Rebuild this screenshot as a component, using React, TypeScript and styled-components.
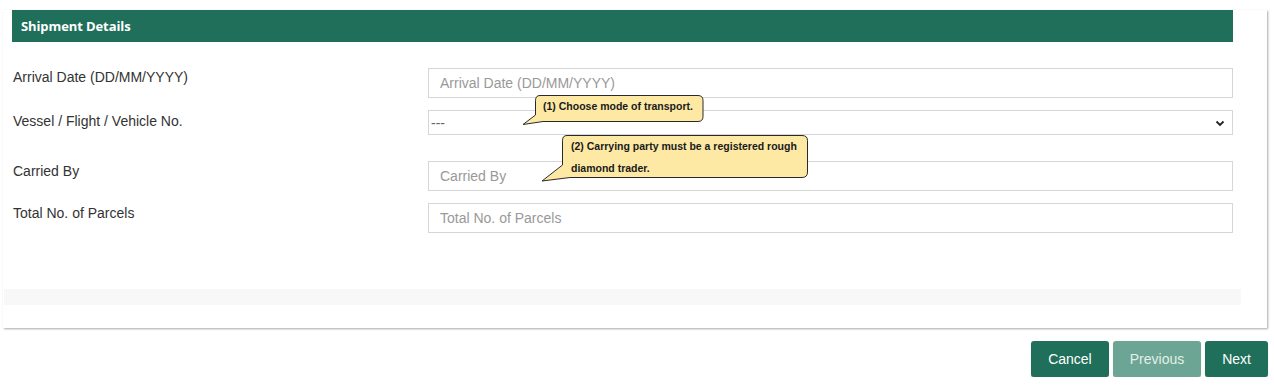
import styled, { createGlobalStyle } from "styled-components";

const GlobalStyle = createGlobalStyle`
   body {
      margin: 0;
      background: #ffffff;
      font-family: "Liberation Sans", Arial, sans-serif;
   }
`;

const Page = styled.div`
   width: 1268px;
   padding: 10px 0 0 3px;
   box-sizing: border-box;
   position: relative;
`;

const Panel = styled.div`
   width: 1264px;
   height: 318px;
   box-sizing: border-box;
   background: #ffffff;
   box-shadow: 1px 1px 2px rgba(0, 0, 0, 0.35);
   display: flex;
   flex-direction: column;
`;

const Header = styled.div`
   margin-left: 9px;
   width: 1221px;
   height: 32px;
   background: #206f5a;
   color: #ffffff;
   font-family: "Open Sans", "Noto Sans", sans-serif;
   font-weight: 700;
   font-size: 13px;
   display: flex;
   align-items: center;
   padding-left: 9px;
   box-sizing: border-box;
   letter-spacing: -0.1px;
`;

const Form = styled.div`
   padding: 26px 0 0 10px;
   display: flex;
   flex-direction: column;
`;

const Row = styled.div<{ $gap: number }>`
   display: flex;
   align-items: flex-start;
   margin-bottom: ${({ $gap }) => $gap}px;
`;

const Label = styled.div<{ $offset: number }>`
   width: 415px;
   font-size: 14px;
   line-height: 18px;
   color: #333333;
   padding-top: ${({ $offset }) => $offset}px;
`;

const TextInput = styled.input`
   width: 805px;
   height: 30px;
   box-sizing: border-box;
   border: 1px solid #d6d6d6;
   padding: 0 11px;
   font-family: "Liberation Sans", Arial, sans-serif;
   font-size: 14px;
   color: #333333;
   outline: none;
   &::placeholder {
      color: #999999;
   }
`;

const SelectBox = styled.div`
   width: 805px;
   height: 25px;
   box-sizing: border-box;
   border: 1px solid #d6d6d6;
   padding: 0 6px 0 2px;
   display: flex;
   align-items: center;
   justify-content: space-between;
   font-size: 14px;
   color: #666666;
`;

const GreyBar = styled.div`
   margin: auto 0 23px 1px;
   width: 1237px;
   height: 16px;
   background: #f8f8f8;
`;

const Footer = styled.div`
   display: flex;
   justify-content: flex-end;
   gap: 4px;
   margin-top: 13px;
`;

const Button = styled.button<{ $disabled?: boolean }>`
   height: 36px;
   padding: 0 17px;
   border: none;
   border-radius: 3px;
   background: ${({ $disabled }) => ($disabled ? "#6ca593" : "#206f5a")};
   color: ${({ $disabled }) => ($disabled ? "#e3efeb" : "#ffffff")};
   font-family: "Liberation Sans", Arial, sans-serif;
   font-size: 14px;
   box-shadow: 0 1px 1px rgba(0, 0, 0, 0.25);
`;

const Callout = styled.div<{ $x: number; $y: number; $w: number; $h: number }>`
   position: absolute;
   left: ${({ $x }) => $x}px;
   top: ${({ $y }) => $y}px;
   width: ${({ $w }) => $w}px;
   height: ${({ $h }) => $h}px;
`;

const CalloutShape = styled.svg`
   position: absolute;
   left: 0;
   top: 0;
`;

const CalloutText = styled.div<{ $left: number; $top: number }>`
   position: absolute;
   left: ${({ $left }) => $left}px;
   top: ${({ $top }) => $top}px;
   font-family: "Liberation Sans", Arial, sans-serif;
   font-weight: 700;
   font-size: 10.5px;
   line-height: 22px;
   color: #1a1a1a;
   white-space: nowrap;
`;

function Chevron() {
   return (
      <svg width="12" height="12" viewBox="0 0 12 12">
         <path d="M2.5 4.5 L6 8 L9.5 4.5" fill="none" stroke="#222" strokeWidth="1.8" />
      </svg>
   );
}

function App() {
   return (
      <>
         <GlobalStyle />
         <Page>
            <Panel>
               <Header>Shipment Details</Header>
               <Form>
                  <Row $gap={12}>
                     <Label $offset={0}>Arrival Date (DD/MM/YYYY)</Label>
                     <TextInput placeholder="Arrival Date (DD/MM/YYYY)" />
                  </Row>
                  <Row $gap={26}>
                     <Label $offset={2}>Vessel / Flight / Vehicle No.</Label>
                     <SelectBox>
                        <span>---</span>
                        <Chevron />
                     </SelectBox>
                  </Row>
                  <Row $gap={12}>
                     <Label $offset={1}>Carried By</Label>
                     <TextInput placeholder="Carried By" />
                  </Row>
                  <Row $gap={0}>
                     <Label $offset={1}>Total No. of Parcels</Label>
                     <TextInput placeholder="Total No. of Parcels" />
                  </Row>
               </Form>
               <GreyBar />
            </Panel>
            <Footer>
               <Button>Cancel</Button>
               <Button $disabled>Previous</Button>
               <Button>Next</Button>
            </Footer>

            <Callout $x={520} $y={93} $w={186} $h={34}>
               <CalloutShape width="186" height="34">
                  <path
                     d="M20 2.5 H178 Q183 2.5 183 7.5 V23.5 Q183 28.5 178 28.5 H23 L3 31.5 L15.5 22 V7.5 Q15.5 2.5 20 2.5 Z"
                     fill="#fde9a4"
                     stroke="#2a2a2a"
                     strokeWidth="1"
                  />
               </CalloutShape>
               <CalloutText $left={23} $top={2}>
                  (1) Choose mode of transport.
               </CalloutText>
            </Callout>

            <Callout $x={538} $y={133} $w={272} $h={51}>
               <CalloutShape width="272" height="51">
                  <path
                     d="M29 2.5 H264 Q269.5 2.5 269.5 7.5 V39 Q269.5 44.5 264 44.5 H32 L4 48 L24.5 32 V7.5 Q24.5 2.5 29 2.5 Z"
                     fill="#fde9a4"
                     stroke="#2a2a2a"
                     strokeWidth="1"
                  />
               </CalloutShape>
               <CalloutText $left={33} $top={2}>
                  (2) Carrying party must be a registered rough
                  <br />
                  diamond trader.
               </CalloutText>
            </Callout>
         </Page>
      </>
   );
}

export default App;
